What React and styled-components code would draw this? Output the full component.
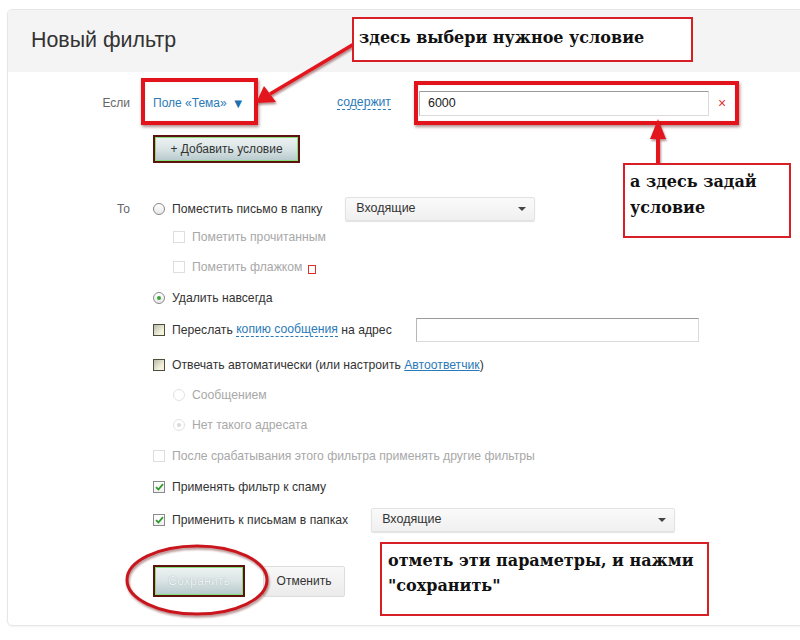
import React from 'react';
import styled, { createGlobalStyle } from 'styled-components';

const GlobalStyle = createGlobalStyle`
  body {
    margin: 0;
    background: #fff;
    font-family: 'Liberation Sans', Arial, sans-serif;
    color: #333;
  }
`;

const Page = styled.div`
  position: relative;
  width: 800px;
  height: 640px;
  overflow: hidden;
`;

const Panel = styled.section`
  margin: 9px 0 0 7px;
  width: 820px;
  height: 617px;
  border: 1px solid #e6e6e6;
  border-radius: 5px;
  box-sizing: border-box;
  box-shadow: 0 1px 2px rgba(0, 0, 0, 0.05);
`;

const Header = styled.header`
  height: 62px;
  background: #f4f4f4;
  display: flex;
  align-items: center;
  padding-left: 23px;

  h1 {
    margin: 0;
    font-weight: normal;
    font-size: 21.4px;
    color: #333;
    padding-bottom: 2px;
  }
`;

const Form = styled.div`
  display: flex;
  flex-direction: column;
  font-size: 12.2px;
`;

const Row = styled.div`
  display: grid;
  grid-template-columns: 122px 1fr;
  column-gap: 23px;
  align-items: center;
  height: ${p => p.$h || 26}px;
  margin-top: ${p => p.$mt || 0}px;
`;

const Label = styled.span`
  text-align: right;
  color: #666;
  font-size: 12px;
`;

const Line = styled.div`
  display: flex;
  align-items: center;
  padding-left: ${p => p.$indent || 0}px;
  color: ${p => (p.$muted ? '#a8a8a8' : '#333')};
  white-space: nowrap;
`;

const FieldLink = styled.span`
  color: #2a7ab8;
  font-size: 12px;
  display: flex;
  align-items: center;
  gap: 5px;
  width: 184px;

  b {
    font-size: 13px;
    color: #1d6fb0;
  }
`;

const DashLink = styled.span`
  color: #2a7ab8;
  border-bottom: 1px dashed #2a7ab8;
  line-height: 13px;
`;

const ULink = styled.span`
  color: #2a7ab8;
  text-decoration: underline;
`;

const TextInput = styled.div`
  width: ${p => p.$w}px;
  height: ${p => p.$hh || 24}px;
  margin-left: ${p => p.$ml || 0}px;
  box-sizing: border-box;
  border: 1px solid #dadada;
  border-top-color: #9a9a9a;
  border-left-color: #b8b8b8;
  background: #fff;
  display: flex;
  align-items: center;
  padding-left: 8px;
  font-size: 12.5px;
  color: #222;
`;

const Remove = styled.span`
  color: #d33;
  font-size: 14px;
  margin-left: 9px;
`;

const Select = styled.div`
  width: ${p => p.$w}px;
  height: 24px;
  margin-left: ${p => p.$ml || 0}px;
  box-sizing: border-box;
  border: 1px solid #e2e2e2;
  border-radius: 2px;
  background: linear-gradient(#fafafa, #f0f0f0);
  box-shadow: 0 1px 1px rgba(0, 0, 0, 0.12);
  display: flex;
  align-items: center;
  justify-content: space-between;
  padding: 0 8px 3px 10px;
  font-size: 12.5px;
  color: #333;

  &::after {
    content: '';
    border-left: 4px solid transparent;
    border-right: 4px solid transparent;
    border-top: 4px solid #444;
    margin-top: 3px;
  }
`;

const Box = styled.span`
  flex: none;
  width: 12px;
  height: 12px;
  margin-right: 7px;
  box-sizing: border-box;
  display: flex;
  align-items: center;
  justify-content: center;
  border: 1px solid ${p => (p.$kind === 'off' ? '#dedede' : p.$kind === 'fill' ? '#4d4d3d' : '#8a8a8a')};
  background: ${p =>
    p.$kind === 'fill'
      ? 'linear-gradient(135deg, #b9b9a9, #f3f3dc 70%)'
      : p.$kind === 'off'
      ? '#fff'
      : 'linear-gradient(#fff, #f1f1f1)'};
`;

const Radio = styled.span`
  flex: none;
  width: 12px;
  height: 12px;
  margin-right: 7px;
  box-sizing: border-box;
  border-radius: 50%;
  border: 1px solid ${p => (p.$off ? '#e2e2e2' : '#8a8a8a')};
  background: ${p => (p.$off ? '#fff' : 'linear-gradient(#fff, #e8e8e8)')};
  display: flex;
  align-items: center;
  justify-content: center;

  &::after {
    content: '';
    display: ${p => (p.$on ? 'block' : 'none')};
    width: 4px;
    height: 4px;
    border-radius: 50%;
    background: ${p => (p.$off ? '#d8d8d8' : '#3da23a')};
  }
`;

const FlagMark = styled.span`
  width: 6px;
  height: 7px;
  border: 1px solid #d9302c;
  margin: 4px 0 0 6px;
`;

const Button = styled.div`
  height: ${p => p.$h || 28}px;
  width: ${p => p.$w}px;
  box-sizing: border-box;
  display: flex;
  align-items: center;
  justify-content: center;
  font-size: 12px;
  border: 1px solid #ddd;
  border-radius: 2px;
  background: linear-gradient(#f8f8f8, #ebebeb);
  color: #333;
  margin-left: ${p => p.$ml || 0}px;
`;

const MarkedButton = styled(Button)`
  border: 2px solid #5e1210;
  border-radius: 0;
  box-shadow: inset 0 0 0 1px #86e07a;
  background: linear-gradient(#eef2f2 0%, #dce6e7 45%, #b7c9cc 100%);
  color: ${p => (p.$faded ? '#eef3f3' : '#333')};
  text-shadow: ${p => (p.$faded ? '0 0 1px #9aa' : 'none')};
  font-size: ${p => (p.$faded ? 12.5 : 12)}px;
`;

const ButtonRow = styled.div`
  display: flex;
  align-items: center;
`;

const Note = styled.div`
  position: absolute;
  left: ${p => p.$x}px;
  top: ${p => p.$y}px;
  width: ${p => p.$w}px;
  height: ${p => p.$h}px;
  box-sizing: border-box;
  border: 2px solid #d81f26;
  background: #fff;
  padding: ${p => p.$pad || '4px 6px'};
  font-family: 'DejaVu Serif', 'Liberation Serif', serif;
  font-weight: bold;
  font-size: ${p => p.$fs || 16}px;
  line-height: ${p => p.$lh || 26}px;
  color: #111;
`;

const Frame = styled.div`
  position: absolute;
  left: ${p => p.$x}px;
  top: ${p => p.$y}px;
  width: ${p => p.$w}px;
  height: ${p => p.$h}px;
  box-sizing: border-box;
  border: 4px solid #e2131b;
  box-shadow: 1px 2px 3px rgba(80, 0, 0, 0.45), inset 0 0 1px rgba(0, 0, 0, 0.3);
`;

const Overlay = styled.svg`
  position: absolute;
  left: 0;
  top: 0;
  pointer-events: none;
`;

const Check = () => (
  <Box>
    <svg width="9" height="8" viewBox="0 0 9 8">
      <path d="M1 4.2 L3.4 6.5 L8 1.2" fill="none" stroke="#2f9a2c" strokeWidth="1.8" />
    </svg>
  </Box>
);

export default function App() {
  return (
    <Page>
      <GlobalStyle />
      <Panel>
        <Header>
          <h1>Новый фильтр</h1>
        </Header>
        <Form>
          <Row $h={28} $mt={17}>
            <Label>Если</Label>
            <Line>
              <FieldLink>
                Поле «Тема» <b>▼</b>
              </FieldLink>
              <DashLink>содержит</DashLink>
              <TextInput $w={290} $hh={25} $ml={28}>6000</TextInput>
              <Remove>×</Remove>
            </Line>
          </Row>
          <Row $h={28} $mt={18}>
            <span />
            <Line>
              <MarkedButton $w={147}>+ Добавить условие</MarkedButton>
            </Line>
          </Row>
          <Row $mt={33}>
            <Label>То</Label>
            <Line>
              <Radio />
              Поместить письмо в папку
              <Select $w={190} $ml={23}>Входящие</Select>
            </Line>
          </Row>
          <Row $mt={2}>
            <span />
            <Line $indent={20} $muted>
              <Box $kind="off" />
              Пометить прочитанным
            </Line>
          </Row>
          <Row $mt={4}>
            <span />
            <Line $indent={20} $muted>
              <Box $kind="off" />
              Пометить флажком
              <FlagMark />
            </Line>
          </Row>
          <Row $mt={5}>
            <span />
            <Line>
              <Radio $on />
              Удалить навсегда
            </Line>
          </Row>
          <Row $mt={6}>
            <span />
            <Line>
              <Box $kind="fill" />
              Переслать&nbsp;<DashLink>копию сообщения</DashLink>&nbsp;на адрес
              <TextInput $w={283} $ml={24} />
            </Line>
          </Row>
          <Row $mt={9}>
            <span />
            <Line>
              <Box $kind="fill" />
              Отвечать автоматически (или настроить&nbsp;<ULink>Автоответчик</ULink>)
            </Line>
          </Row>
          <Row $mt={4}>
            <span />
            <Line $indent={20} $muted>
              <Radio $off />
              Сообщением
            </Line>
          </Row>
          <Row $mt={4}>
            <span />
            <Line $indent={20} $muted>
              <Radio $off $on />
              Нет такого адресата
            </Line>
          </Row>
          <Row $mt={5}>
            <span />
            <Line $muted>
              <Box $kind="off" />
              После срабатывания этого фильтра применять другие фильтры
            </Line>
          </Row>
          <Row $mt={5}>
            <span />
            <Line>
              <Check />
              Применять фильтр к спаму
            </Line>
          </Row>
          <Row $mt={7}>
            <span />
            <Line>
              <Check />
              Применить к письмам в папках
              <Select $w={304} $ml={23}>Входящие</Select>
            </Line>
          </Row>
          <Row $h={32} $mt={32}>
            <span />
            <ButtonRow>
              <MarkedButton $w={92} $h={32} $faded>Сохранить</MarkedButton>
              <Button $w={82} $h={31} $ml={18}>Отменить</Button>
            </ButtonRow>
          </Row>
        </Form>
      </Panel>

      <Frame $x={141} $y={78} $w={117} $h={47} />
      <Frame $x={414} $y={81} $w={325} $h={44} />

      <Overlay width="800" height="640" viewBox="0 0 800 640">
        <defs>
          <filter id="sh" x="-10%" y="-10%" width="130%" height="130%">
            <feDropShadow dx="1" dy="2" stdDeviation="1.2" floodColor="#500" floodOpacity="0.45" />
          </filter>
        </defs>
        <g filter="url(#sh)" fill="#e2131b" stroke="#e2131b">
          <line x1="354" y1="44" x2="270" y2="94" strokeWidth="3.5" />
          <polygon points="256,103 264,86 276,102" stroke="none" />
          <line x1="658" y1="164" x2="658" y2="134" strokeWidth="4" />
          <polygon points="658,119 650,139 666,139" stroke="none" />
        </g>
        <ellipse cx="197" cy="580" rx="70" ry="34" fill="none" stroke="#c8161d" strokeWidth="3" filter="url(#sh)" />
      </Overlay>

      <Note $x={352} $y={17} $w={341} $h={45} $pad="6px 5px" $fs={16} $lh={26}>
        здесь выбери нужное условие
      </Note>
      <Note $x={623} $y={163} $w={168} $h={75} $pad="4px 5px" $fs={16} $lh={26}>
        а здесь задай условие
      </Note>
      <Note $x={380} $y={542} $w={329} $h={74} $pad="4px 6px" $fs={16} $lh={25}>
        отметь эти параметры, и нажми "сохранить"
      </Note>
    </Page>
  );
}
